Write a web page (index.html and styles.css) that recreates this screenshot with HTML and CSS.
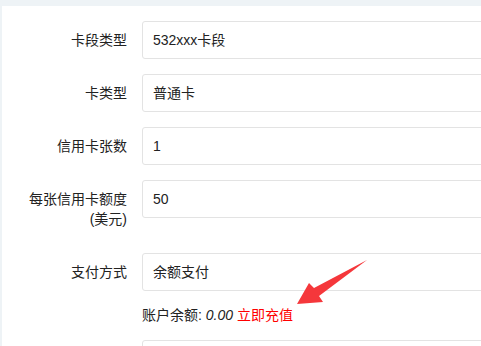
FILE: index.html
```html
<!DOCTYPE html>
<html lang="zh-CN">

<head>
    <meta charset="UTF-8">
    <meta name="viewport" content="width=device-width, initial-scale=1.0">
    <title>申请信用卡</title>
    <link rel="stylesheet" href="styles.css">
</head>

<body>
    <div id="panel">
        <div class="row">
            <div class="label">卡段类型</div>
            <div class="field">
                <div class="input">532xxx卡段</div>
            </div>
        </div>
        <div class="row">
            <div class="label">卡类型</div>
            <div class="field">
                <div class="input">普通卡</div>
            </div>
        </div>
        <div class="row">
            <div class="label">信用卡张数</div>
            <div class="field">
                <div class="input">1</div>
            </div>
        </div>
        <div class="row">
            <div class="label">每张信用卡额度<br>(美元)</div>
            <div class="field">
                <div class="input">50</div>
            </div>
        </div>
        <div class="row">
            <div class="label">支付方式</div>
            <div class="field">
                <div class="input">余额支付</div>
                <div class="help">账户余额: <i>0.00</i> <span class="red">立即充值</span></div>
            </div>
        </div>
        <div class="row">
            <div class="label"></div>
            <div class="field">
                <div class="input"></div>
            </div>
        </div>

        <!-- 标注箭头 -->
        <svg class="arrow" width="80" height="50" viewBox="0 0 80 50">
            <polygon points="0,44 12,23 17,28 70,0 22,36 26,42" fill="#f5373b" />
        </svg>
    </div>
</body>

</html>
```

FILE: styles.css
```css
* {
    margin: 0;
    padding: 0;
    box-sizing: border-box;
}

html,
body {
    overflow: hidden;
}

body {
    width: 481px;
    height: 346px;
    background-color: #eef3f6;
    font-family: "Liberation Sans", "Noto Sans CJK SC", sans-serif;
    font-size: 14px;
    color: #222;
    padding: 6px 0 0 2px;
}

#panel {
    position: relative;
    background-color: #fff;
    height: 340px;
    padding: 15px 0 0 15px;
    overflow: hidden;
}

.row {
    display: flex;
    gap: 15px;
    margin-bottom: 15px;
}

.label {
    width: 110px;
    flex-shrink: 0;
    text-align: right;
    line-height: 20px;
    padding: 9px 0 9px;
}

.field {
    min-width: 380px;
}

.input {
    height: 38px;
    line-height: 36px;
    border: 1px solid #e3e3e3;
    border-radius: 3px;
    padding: 0 10px;
}

.help {
    line-height: 20px;
    padding-top: 14px;
}

.help i {
    font-style: italic;
}

.red {
    color: #ff0000;
}

.arrow {
    position: absolute;
    left: 295px;
    top: 254px;
}
```
